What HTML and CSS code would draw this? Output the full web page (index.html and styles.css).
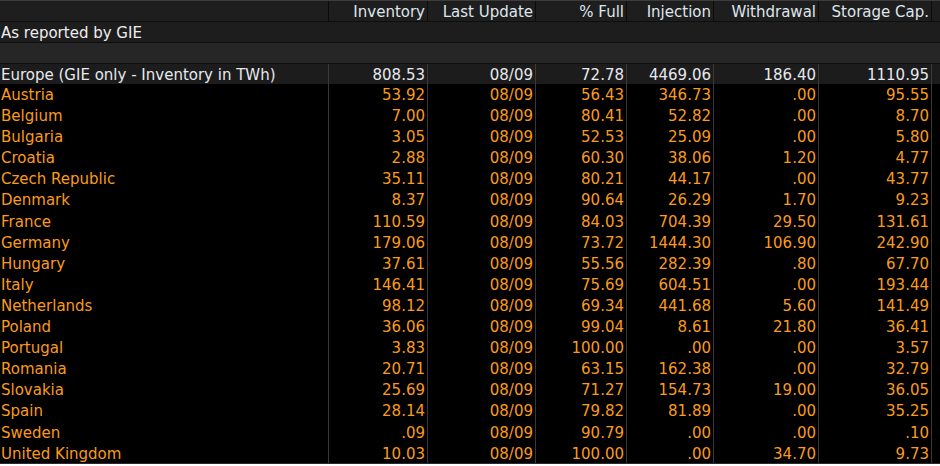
FILE: index.html
```html
<!DOCTYPE html>
<html>
<head>
<meta charset="utf-8">
<link rel="stylesheet" href="styles.css">
</head>
<body>
<div class="table">
  <div class="row head">
    <div class="c lab"></div>
    <div class="c">Inventory</div>
    <div class="c">Last Update</div>
    <div class="c">% Full</div>
    <div class="c">Injection</div>
    <div class="c">Withdrawal</div>
    <div class="c">Storage Cap.</div>
    <div class="c end"></div>
  </div>
  <div class="band gie">As reported by GIE</div>
  <div class="band empty"></div>
  <div class="row total">
    <div class="c lab">Europe (GIE only - Inventory in TWh)</div>
    <div class="c">808.53</div><div class="c">08/09</div><div class="c">72.78</div><div class="c">4469.06</div><div class="c">186.40</div><div class="c">1110.95</div><div class="c end"></div>
  </div>
  <div class="row"><div class="c lab">Austria</div><div class="c">53.92</div><div class="c">08/09</div><div class="c">56.43</div><div class="c">346.73</div><div class="c">.00</div><div class="c">95.55</div><div class="c end"></div></div>
  <div class="row"><div class="c lab">Belgium</div><div class="c">7.00</div><div class="c">08/09</div><div class="c">80.41</div><div class="c">52.82</div><div class="c">.00</div><div class="c">8.70</div><div class="c end"></div></div>
  <div class="row"><div class="c lab">Bulgaria</div><div class="c">3.05</div><div class="c">08/09</div><div class="c">52.53</div><div class="c">25.09</div><div class="c">.00</div><div class="c">5.80</div><div class="c end"></div></div>
  <div class="row"><div class="c lab">Croatia</div><div class="c">2.88</div><div class="c">08/09</div><div class="c">60.30</div><div class="c">38.06</div><div class="c">1.20</div><div class="c">4.77</div><div class="c end"></div></div>
  <div class="row"><div class="c lab">Czech Republic</div><div class="c">35.11</div><div class="c">08/09</div><div class="c">80.21</div><div class="c">44.17</div><div class="c">.00</div><div class="c">43.77</div><div class="c end"></div></div>
  <div class="row"><div class="c lab">Denmark</div><div class="c">8.37</div><div class="c">08/09</div><div class="c">90.64</div><div class="c">26.29</div><div class="c">1.70</div><div class="c">9.23</div><div class="c end"></div></div>
  <div class="row"><div class="c lab">France</div><div class="c">110.59</div><div class="c">08/09</div><div class="c">84.03</div><div class="c">704.39</div><div class="c">29.50</div><div class="c">131.61</div><div class="c end"></div></div>
  <div class="row"><div class="c lab">Germany</div><div class="c">179.06</div><div class="c">08/09</div><div class="c">73.72</div><div class="c">1444.30</div><div class="c">106.90</div><div class="c">242.90</div><div class="c end"></div></div>
  <div class="row"><div class="c lab">Hungary</div><div class="c">37.61</div><div class="c">08/09</div><div class="c">55.56</div><div class="c">282.39</div><div class="c">.80</div><div class="c">67.70</div><div class="c end"></div></div>
  <div class="row"><div class="c lab">Italy</div><div class="c">146.41</div><div class="c">08/09</div><div class="c">75.69</div><div class="c">604.51</div><div class="c">.00</div><div class="c">193.44</div><div class="c end"></div></div>
  <div class="row"><div class="c lab">Netherlands</div><div class="c">98.12</div><div class="c">08/09</div><div class="c">69.34</div><div class="c">441.68</div><div class="c">5.60</div><div class="c">141.49</div><div class="c end"></div></div>
  <div class="row"><div class="c lab">Poland</div><div class="c">36.06</div><div class="c">08/09</div><div class="c">99.04</div><div class="c">8.61</div><div class="c">21.80</div><div class="c">36.41</div><div class="c end"></div></div>
  <div class="row"><div class="c lab">Portugal</div><div class="c">3.83</div><div class="c">08/09</div><div class="c">100.00</div><div class="c">.00</div><div class="c">.00</div><div class="c">3.57</div><div class="c end"></div></div>
  <div class="row"><div class="c lab">Romania</div><div class="c">20.71</div><div class="c">08/09</div><div class="c">63.15</div><div class="c">162.38</div><div class="c">.00</div><div class="c">32.79</div><div class="c end"></div></div>
  <div class="row"><div class="c lab">Slovakia</div><div class="c">25.69</div><div class="c">08/09</div><div class="c">71.27</div><div class="c">154.73</div><div class="c">19.00</div><div class="c">36.05</div><div class="c end"></div></div>
  <div class="row"><div class="c lab">Spain</div><div class="c">28.14</div><div class="c">08/09</div><div class="c">79.82</div><div class="c">81.89</div><div class="c">.00</div><div class="c">35.25</div><div class="c end"></div></div>
  <div class="row"><div class="c lab">Sweden</div><div class="c">.09</div><div class="c">08/09</div><div class="c">90.79</div><div class="c">.00</div><div class="c">.00</div><div class="c">.10</div><div class="c end"></div></div>
  <div class="row last"><div class="c lab">United Kingdom</div><div class="c">10.03</div><div class="c">08/09</div><div class="c">100.00</div><div class="c">.00</div><div class="c">34.70</div><div class="c">9.73</div><div class="c end"></div></div>
</div>
</body>
</html>
```

FILE: styles.css
```css
html, body {
  margin: 0;
  padding: 0;
  background: #ffffff;
}
.table {
  width: 940px;
  background: #000;
  font-family: "DejaVu Sans", sans-serif;
  font-size: 15px;
  color: #f99b1c;
}
.row {
  display: grid;
  grid-template-columns: 329px 99px 108px 91px 87px 105px 113px 8px;
  height: 21.1px;
  line-height: 21px;
}
.row.last {
  border-bottom: 1px solid #2a2a2a;
  height: 20.1px;
}
.c {
  box-sizing: border-box;
  border-right: 1px solid #383838;
  text-align: right;
  padding-top: 1px;
  padding-right: 2px;
  white-space: nowrap;
  overflow: hidden;
}
.c.lab {
  text-align: left;
  padding-left: 1px;
}
.c.end {
  border-right: none;
}
.head {
  background: #1e1e1e;
  border-top: 1px solid #3c3c3c;
  height: 20px;
  line-height: 20px;
  color: #dfe5ec;
}
.head .c {
  border-right-color: #0c0c0c;
}
.band {
  height: 20px;
  line-height: 20px;
  padding-top: 1px;
  padding-left: 1px;
  box-sizing: border-box;
  height: 21px;
  border-top: 1px solid #0e0e0e;
}
.gie {
  background: #1d1d1d;
  color: #eeeeee;
}
.empty {
  background: #262626;
}
.total {
  background: #1c1c1c;
  color: #e6e9ee;
  border-top: 1px solid #0e0e0e;
  height: 20px;
  line-height: 20px;
}
.total .c {
  border-right-color: #3a3a3a;
}
```
